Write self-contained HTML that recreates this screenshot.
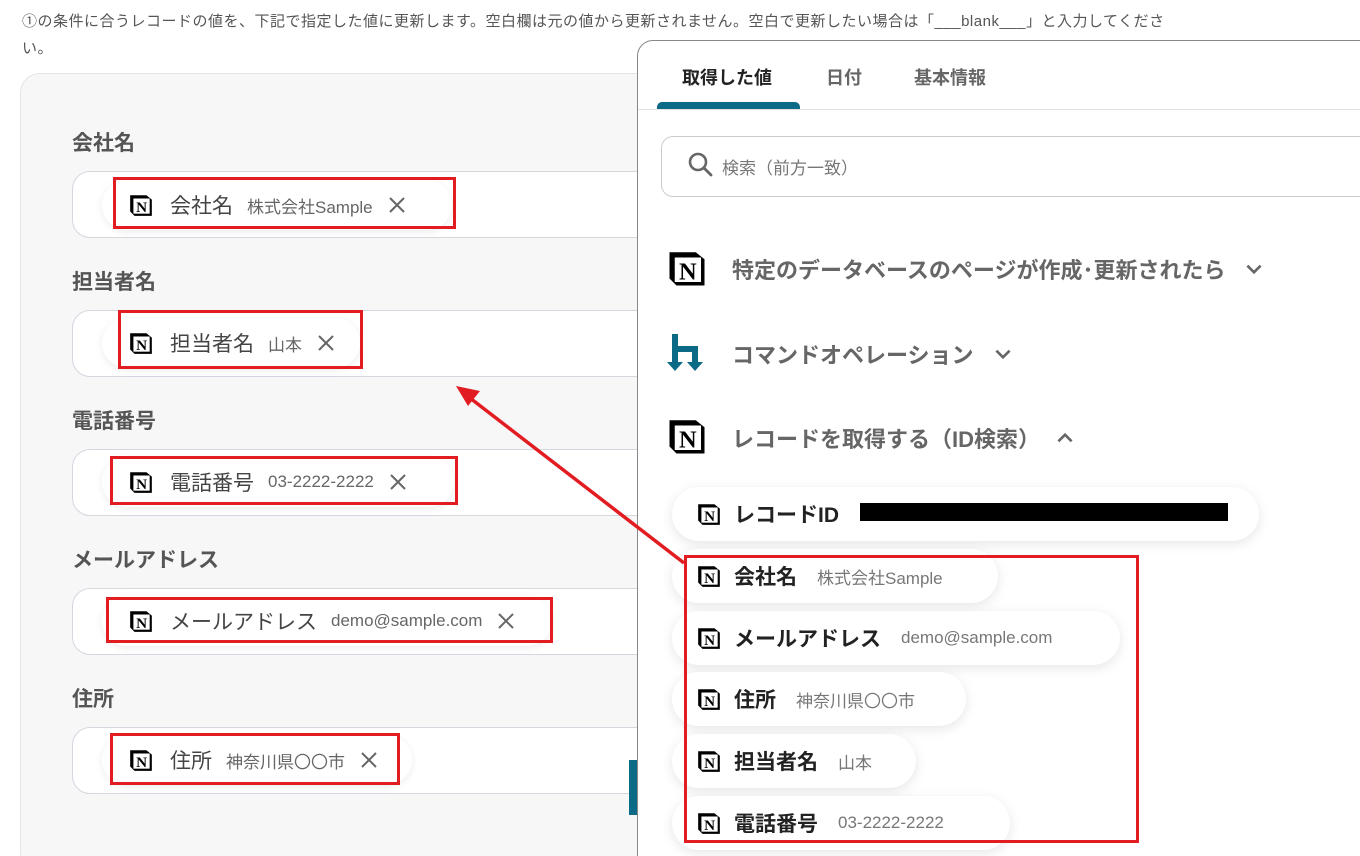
<!DOCTYPE html>
<html><head><meta charset="utf-8"><style>
*{margin:0;padding:0;box-sizing:border-box}
html,body{width:1360px;height:856px;overflow:hidden}
body{background:#fff;font-family:"Liberation Sans","Noto Sans CJK JP",sans-serif;position:relative;color:#333}
.a{position:absolute}
.top{left:22px;font-size:15px;letter-spacing:.5px;color:#555;white-space:nowrap}
.panel{left:20px;top:73px;width:640px;height:800px;background:#f7f7f8;border:1px solid #e2e4e8;border-radius:20px}
.lbl{left:72px;font-size:21px;color:#555;font-weight:bold}
.inp{left:72px;width:600px;height:67px;background:#fff;border:1px solid #d3d7de;border-radius:18px}
.chip{height:50px;background:#fff;border-radius:25px;box-shadow:0 2px 8px rgba(0,0,0,.08);display:flex;align-items:center;padding-left:26px;font-size:21px;color:#444;white-space:nowrap}
.chip .v{font-size:17px;color:#666;margin-left:14px}
.chip .x{margin-left:14px;display:flex}
.red{border:3px solid #e21d22}
.rp{left:637px;top:40px;width:740px;height:830px;background:#fff;border:1px solid #888;border-radius:16px 0 0 0}
.tab{top:64px;font-size:18px;font-weight:bold;color:#666}
.grp{left:732px;font-size:22px;font-weight:bold;color:#666;white-space:nowrap;display:flex;align-items:center}
.rc{height:54px;background:#fff;border-radius:27px;box-shadow:0 3px 12px rgba(0,0,0,.1);display:flex;align-items:center;padding-left:24px;font-size:21px;font-weight:bold;color:#222;white-space:nowrap}
.rc .v{font-size:17px;color:#777;font-weight:normal;margin-left:20px}
</style></head><body>
<svg width="0" height="0" style="position:absolute"><defs>
<symbol id="n" viewBox="0 0 24 24"><path d="M2 3h15l5 4v15H6l-4-4z" fill="#000"/><rect x="5" y="6" width="15" height="14" fill="#fff"/><text x="12.5" y="18.5" font-family="Liberation Serif,serif" font-weight="bold" font-size="14" text-anchor="middle" fill="#000">N</text></symbol>
<symbol id="x" viewBox="0 0 20 20"><path d="M3 3l14 14M17 3L3 17" stroke="#666" stroke-width="2" fill="none"/></symbol>
<symbol id="dn" viewBox="0 0 20 20"><path d="M4 7l6 6 6-6" stroke="#666" stroke-width="2.4" fill="none"/></symbol>
<symbol id="up" viewBox="0 0 20 20"><path d="M4 13l6-6 6 6" stroke="#666" stroke-width="2.4" fill="none"/></symbol>
</defs></svg>
<div class="a top" style="top:10px">①の条件に合うレコードの値を、下記で指定した値に更新します。空白欄は元の値から更新されません。空白で更新したい場合は「___blank___」と入力してくださ</div>
<div class="a top" style="top:37px">い。</div>
<div class="a panel"></div>

<div class="a lbl" style="top:127px">会社名</div>
<div class="a inp" style="top:171px"></div>
<div class="a chip" style="left:102px;top:180px;width:350px"><svg width="26" height="26" style="margin-right:16px"><use href="#n"/></svg>会社名<span class="v">株式会社Sample</span><span class="x"><svg width="20" height="20"><use href="#x"/></svg></span></div>
<div class="a red" style="left:113px;top:177px;width:343px;height:52px"></div>

<div class="a lbl" style="top:266px">担当者名</div>
<div class="a inp" style="top:310px"></div>
<div class="a chip" style="left:102px;top:318px;width:258px"><svg width="26" height="26" style="margin-right:16px"><use href="#n"/></svg>担当者名<span class="v">山本</span><span class="x"><svg width="20" height="20"><use href="#x"/></svg></span></div>
<div class="a red" style="left:118px;top:310px;width:245px;height:59px"></div>

<div class="a lbl" style="top:405px">電話番号</div>
<div class="a inp" style="top:449px"></div>
<div class="a chip" style="left:102px;top:457px;width:352px"><svg width="26" height="26" style="margin-right:16px"><use href="#n"/></svg>電話番号<span class="v">03-2222-2222</span><span class="x"><svg width="20" height="20"><use href="#x"/></svg></span></div>
<div class="a red" style="left:110px;top:456px;width:348px;height:49px"></div>

<div class="a lbl" style="top:544px">メールアドレス</div>
<div class="a inp" style="top:588px"></div>
<div class="a chip" style="left:102px;top:596px;width:450px"><svg width="26" height="26" style="margin-right:16px"><use href="#n"/></svg>メールアドレス<span class="v">demo@sample.com</span><span class="x"><svg width="20" height="20"><use href="#x"/></svg></span></div>
<div class="a red" style="left:106px;top:597px;width:447px;height:46px"></div>

<div class="a lbl" style="top:683px">住所</div>
<div class="a inp" style="top:727px"></div>
<div class="a chip" style="left:102px;top:735px;width:310px"><svg width="26" height="26" style="margin-right:16px"><use href="#n"/></svg>住所<span class="v">神奈川県〇〇市</span><span class="x"><svg width="20" height="20"><use href="#x"/></svg></span></div>
<div class="a red" style="left:110px;top:733px;width:290px;height:52px"></div>

<div class="a" style="left:629px;top:760px;width:10px;height:55px;background:#0b6a85"></div>

<div class="a rp"></div>
<div class="a tab" style="left:682px;color:#222">取得した値</div>
<div class="a tab" style="left:826px">日付</div>
<div class="a tab" style="left:914px">基本情報</div>
<div class="a" style="left:657px;top:102px;width:143px;height:7px;background:#0b6a85;border-radius:5px 5px 0 0"></div>
<div class="a" style="left:638px;top:109px;width:722px;height:1px;background:#e2e2e2"></div>
<div class="a" style="left:661px;top:136px;width:720px;height:61px;border:1px solid #ccc;border-radius:12px"></div>
<svg class="a" style="left:687px;top:151px" width="28" height="28" viewBox="0 0 28 28"><circle cx="11" cy="11" r="8" fill="none" stroke="#666" stroke-width="2.6"/><path d="M17 17l7 7" stroke="#666" stroke-width="2.8" stroke-linecap="round"/></svg>
<div class="a" style="left:722px;top:154px;font-size:17px;color:#777">検索（前方一致）</div>

<svg class="a" style="left:666px;top:247px" width="42" height="42"><use href="#n"/></svg>
<div class="a grp" style="top:253px">特定のデータベースのページが作成･更新されたら<svg width="22" height="22" style="margin-left:18px"><use href="#dn"/></svg></div>
<svg class="a" style="left:666px;top:332px" width="42" height="42" viewBox="0 0 42 42" fill="#0b6a85"><rect x="6" y="2" width="6" height="30"/><rect x="6" y="14" width="26" height="6"/><rect x="26" y="14" width="6" height="18"/><path d="M1 30h16l-8 9z M21 30h16l-8 9z"/></svg>
<div class="a grp" style="top:338px">コマンドオペレーション<svg width="22" height="22" style="margin-left:18px"><use href="#dn"/></svg></div>
<svg class="a" style="left:666px;top:415px" width="42" height="42"><use href="#n"/></svg>
<div class="a grp" style="top:422px">レコードを取得する（ID検索）<svg width="22" height="22" style="margin-left:14px"><use href="#up"/></svg></div>

<div class="a rc" style="left:672px;top:487px;width:587px"><svg width="26" height="26" style="margin-right:12px"><use href="#n"/></svg>レコードID</div>
<div class="a" style="left:860px;top:503px;width:368px;height:18px;background:#000"></div>

<div class="a rc" style="left:672px;top:549px;width:326px"><svg width="26" height="26" style="margin-right:12px"><use href="#n"/></svg>会社名<span class="v">株式会社Sample</span></div>
<div class="a rc" style="left:672px;top:611px;width:448px"><svg width="26" height="26" style="margin-right:12px"><use href="#n"/></svg>メールアドレス<span class="v">demo@sample.com</span></div>
<div class="a rc" style="left:672px;top:672px;width:294px"><svg width="26" height="26" style="margin-right:12px"><use href="#n"/></svg>住所<span class="v">神奈川県〇〇市</span></div>
<div class="a rc" style="left:672px;top:734px;width:244px"><svg width="26" height="26" style="margin-right:12px"><use href="#n"/></svg>担当者名<span class="v">山本</span></div>
<div class="a rc" style="left:672px;top:796px;width:338px"><svg width="26" height="26" style="margin-right:12px"><use href="#n"/></svg>電話番号<span class="v">03-2222-2222</span></div>
<div class="a red" style="left:684px;top:555px;width:455px;height:288px"></div>

<svg class="a" style="left:0;top:0" width="1360" height="856"><line x1="684" y1="563" x2="470" y2="398" stroke="#e21d22" stroke-width="3.5"/><path d="M456 386l24 5-12 15z" fill="#e21d22"/></svg>
</body></html>
